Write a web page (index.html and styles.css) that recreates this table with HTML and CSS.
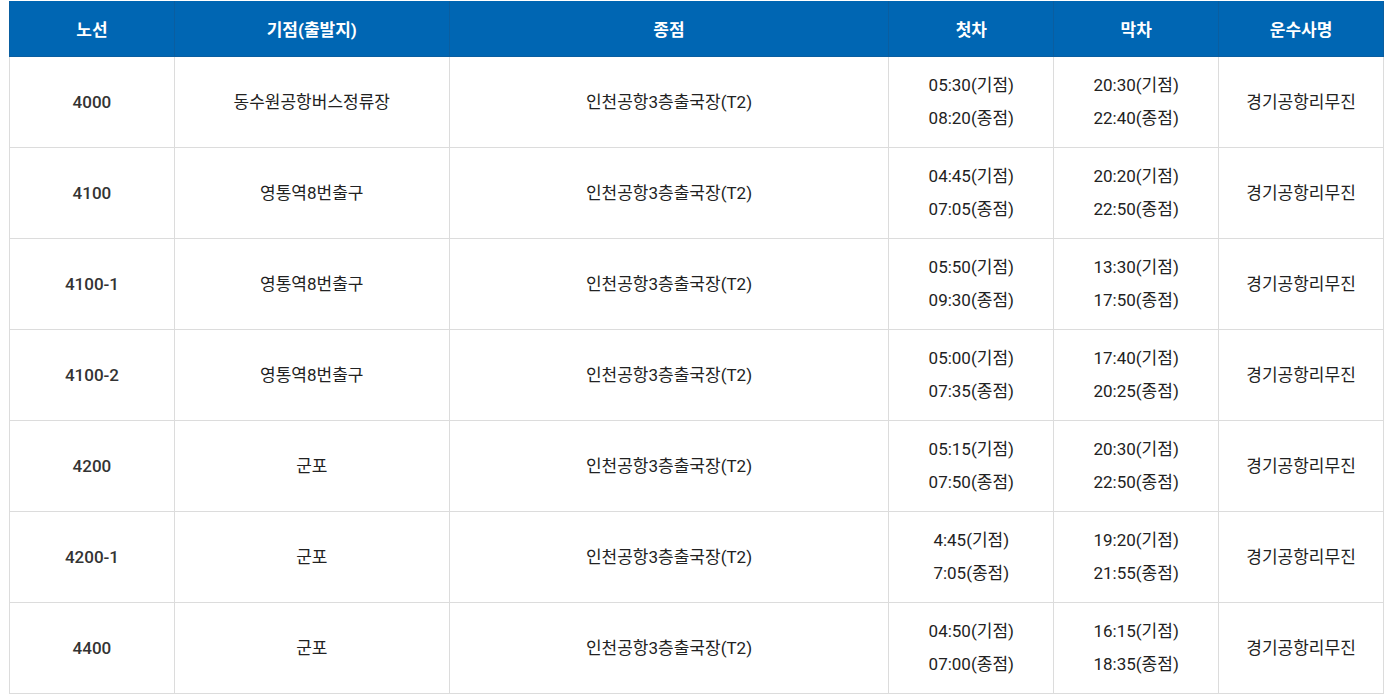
FILE: index.html
```html
<!DOCTYPE html>
<html lang="ko">
<head>
<meta charset="utf-8">
<title>공항버스 노선</title>
<link rel="stylesheet" href="styles.css">
</head>
<body>
<div class="wrap">
<table class="bus">
<colgroup>
<col class="c12"><col class="c20"><col class="c32"><col class="c12"><col class="c12"><col class="c12">
</colgroup>
<thead>
<tr><th>노선</th><th>기점(출발지)</th><th>종점</th><th>첫차</th><th>막차</th><th>운수사명</th></tr>
</thead>
<tbody>
<tr><td class="no">4000</td><td>동수원공항버스정류장</td><td>인천공항3층출국장(T2)</td><td>05:30(기점)<br>08:20(종점)</td><td>20:30(기점)<br>22:40(종점)</td><td>경기공항리무진</td></tr>
<tr><td class="no">4100</td><td>영통역8번출구</td><td>인천공항3층출국장(T2)</td><td>04:45(기점)<br>07:05(종점)</td><td>20:20(기점)<br>22:50(종점)</td><td>경기공항리무진</td></tr>
<tr><td class="no">4100-1</td><td>영통역8번출구</td><td>인천공항3층출국장(T2)</td><td>05:50(기점)<br>09:30(종점)</td><td>13:30(기점)<br>17:50(종점)</td><td>경기공항리무진</td></tr>
<tr><td class="no">4100-2</td><td>영통역8번출구</td><td>인천공항3층출국장(T2)</td><td>05:00(기점)<br>07:35(종점)</td><td>17:40(기점)<br>20:25(종점)</td><td>경기공항리무진</td></tr>
<tr><td class="no">4200</td><td>군포</td><td>인천공항3층출국장(T2)</td><td>05:15(기점)<br>07:50(종점)</td><td>20:30(기점)<br>22:50(종점)</td><td>경기공항리무진</td></tr>
<tr><td class="no">4200-1</td><td>군포</td><td>인천공항3층출국장(T2)</td><td>4:45(기점)<br>7:05(종점)</td><td>19:20(기점)<br>21:55(종점)</td><td>경기공항리무진</td></tr>
<tr><td class="no">4400</td><td>군포</td><td>인천공항3층출국장(T2)</td><td>04:50(기점)<br>07:00(종점)</td><td>16:15(기점)<br>18:35(종점)</td><td>경기공항리무진</td></tr>
</tbody>
</table>
</div>
</body>
</html>
```
FILE: styles.css
```css
html, body {
  margin: 0;
  padding: 0;
  background: #fff;
}
.wrap {
  padding: 1px 6px 0 9px;
}
.bus {
  width: 1375px;
  border-collapse: collapse;
  table-layout: fixed;
  font-family: Roboto, "Noto Sans CJK KR", sans-serif;
  font-size: 17px;
  color: #222;
}
.c12 { width: 12%; }
.c20 { width: 20%; }
.c32 { width: 32%; }
.bus th {
  height: 55px;
  padding: 0;
  background: #0066b3;
  color: #fff;
  font-weight: 700;
  border: 1px solid #0a5ea0;
  border-top: 0;
  text-align: center;
  vertical-align: middle;
}
.bus td {
  height: 90px;
  padding: 0;
  border: 1px solid #dcdcdc;
  text-align: center;
  vertical-align: middle;
  line-height: 33px;
}
.bus td.no {
  font-weight: 500;
  color: #333;
}
```
